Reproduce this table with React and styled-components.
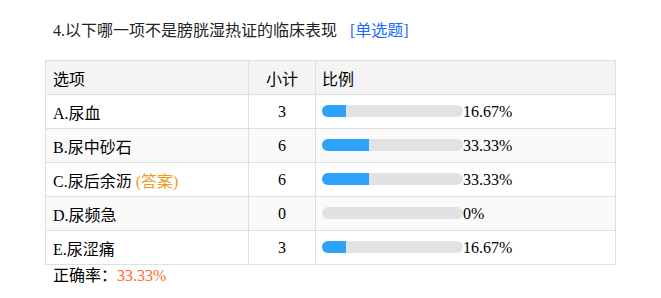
import React from "react";
import styled, { createGlobalStyle } from "styled-components";

const Global = createGlobalStyle`
  html, body { margin: 0; padding: 0; background: #fff; }
  body { font-family: "Liberation Serif", "Noto Sans CJK SC", serif; color: #000; }
`;

const Page = styled.div`
  padding: 20px 0 0 45px;
  width: 570px;
`;

const Title = styled.div`
  font-size: 16px;
  line-height: 21px;
  padding-left: 8px;
  color: #222;
  margin-bottom: 19px;
  white-space: nowrap;
`;

const Tag = styled.span`
  color: #1a6cff;
  margin-left: 13px;
`;

const Table = styled.table`
  width: 570px;
  border-collapse: collapse;
  font-size: 16px;
  table-layout: fixed;
`;

const Row = styled.tr`
  background: ${(p) => (p.$head ? "#f4f4f4" : p.$alt ? "#fafafa" : "#fff")};
`;

const Cell = styled.td`
  border: 1px solid #dfdfdf;
  height: 34px;
  box-sizing: border-box;
  text-align: ${(p) => (p.$center ? "center" : "left")};
  padding: 0 0 0 ${(p) => p.$pad}px;
  white-space: nowrap;
  vertical-align: middle;
`;

const Answer = styled.span`
  color: #f39a1e;
  margin-left: 4px;
`;

const Track = styled.span`
  display: inline-block;
  width: 141px;
  height: 12px;
  border-radius: 6px;
  background: #e2e2e3;
  overflow: hidden;
  vertical-align: middle;
  margin-top: -3px;
`;

const Fill = styled.span`
  display: block;
  height: 100%;
  background: #2ea2f8;
`;

const Footer = styled.div`
  font-size: 16px;
  line-height: 22px;
  padding-left: 8px;
`;

const Rate = styled.span`
  color: #ff6a1f;
`;

const rows = [
  { label: "A.尿血", count: 3, pct: 16.67 },
  { label: "B.尿中砂石", count: 6, pct: 33.33 },
  { label: "C.尿后余沥", count: 6, pct: 33.33, answer: true },
  { label: "D.尿频急", count: 0, pct: 0 },
  { label: "E.尿涩痛", count: 3, pct: 16.67 },
];

const fmt = (n) => (n === 0 ? "0%" : n.toFixed(2) + "%");

export default function App() {
  return (
    <>
      <Global />
      <Page>
        <Title>
          4.以下哪一项不是膀胱湿热证的临床表现<Tag>[单选题]</Tag>
        </Title>
        <Table>
          <colgroup>
            <col style={{ width: 203 }} />
            <col style={{ width: 67 }} />
            <col style={{ width: 300 }} />
          </colgroup>
          <tbody>
            <Row $head>
              <Cell $pad={7}>选项</Cell>
              <Cell $center $pad={0}>小计</Cell>
              <Cell $pad={6}>比例</Cell>
            </Row>
            {rows.map((r, i) => (
              <Row key={r.label} $alt={i % 2 === 1}>
                <Cell $pad={7}>
                  {r.label}
                  {r.answer && <Answer>(答案)</Answer>}
                </Cell>
                <Cell $center $pad={0}>{r.count}</Cell>
                <Cell $pad={6}>
                  <Track>
                    <Fill style={{ width: `${r.pct}%` }} />
                  </Track>
                  {fmt(r.pct)}
                </Cell>
              </Row>
            ))}
          </tbody>
        </Table>
        <Footer>
          正确率：<Rate>33.33%</Rate>
        </Footer>
      </Page>
    </>
  );
}
